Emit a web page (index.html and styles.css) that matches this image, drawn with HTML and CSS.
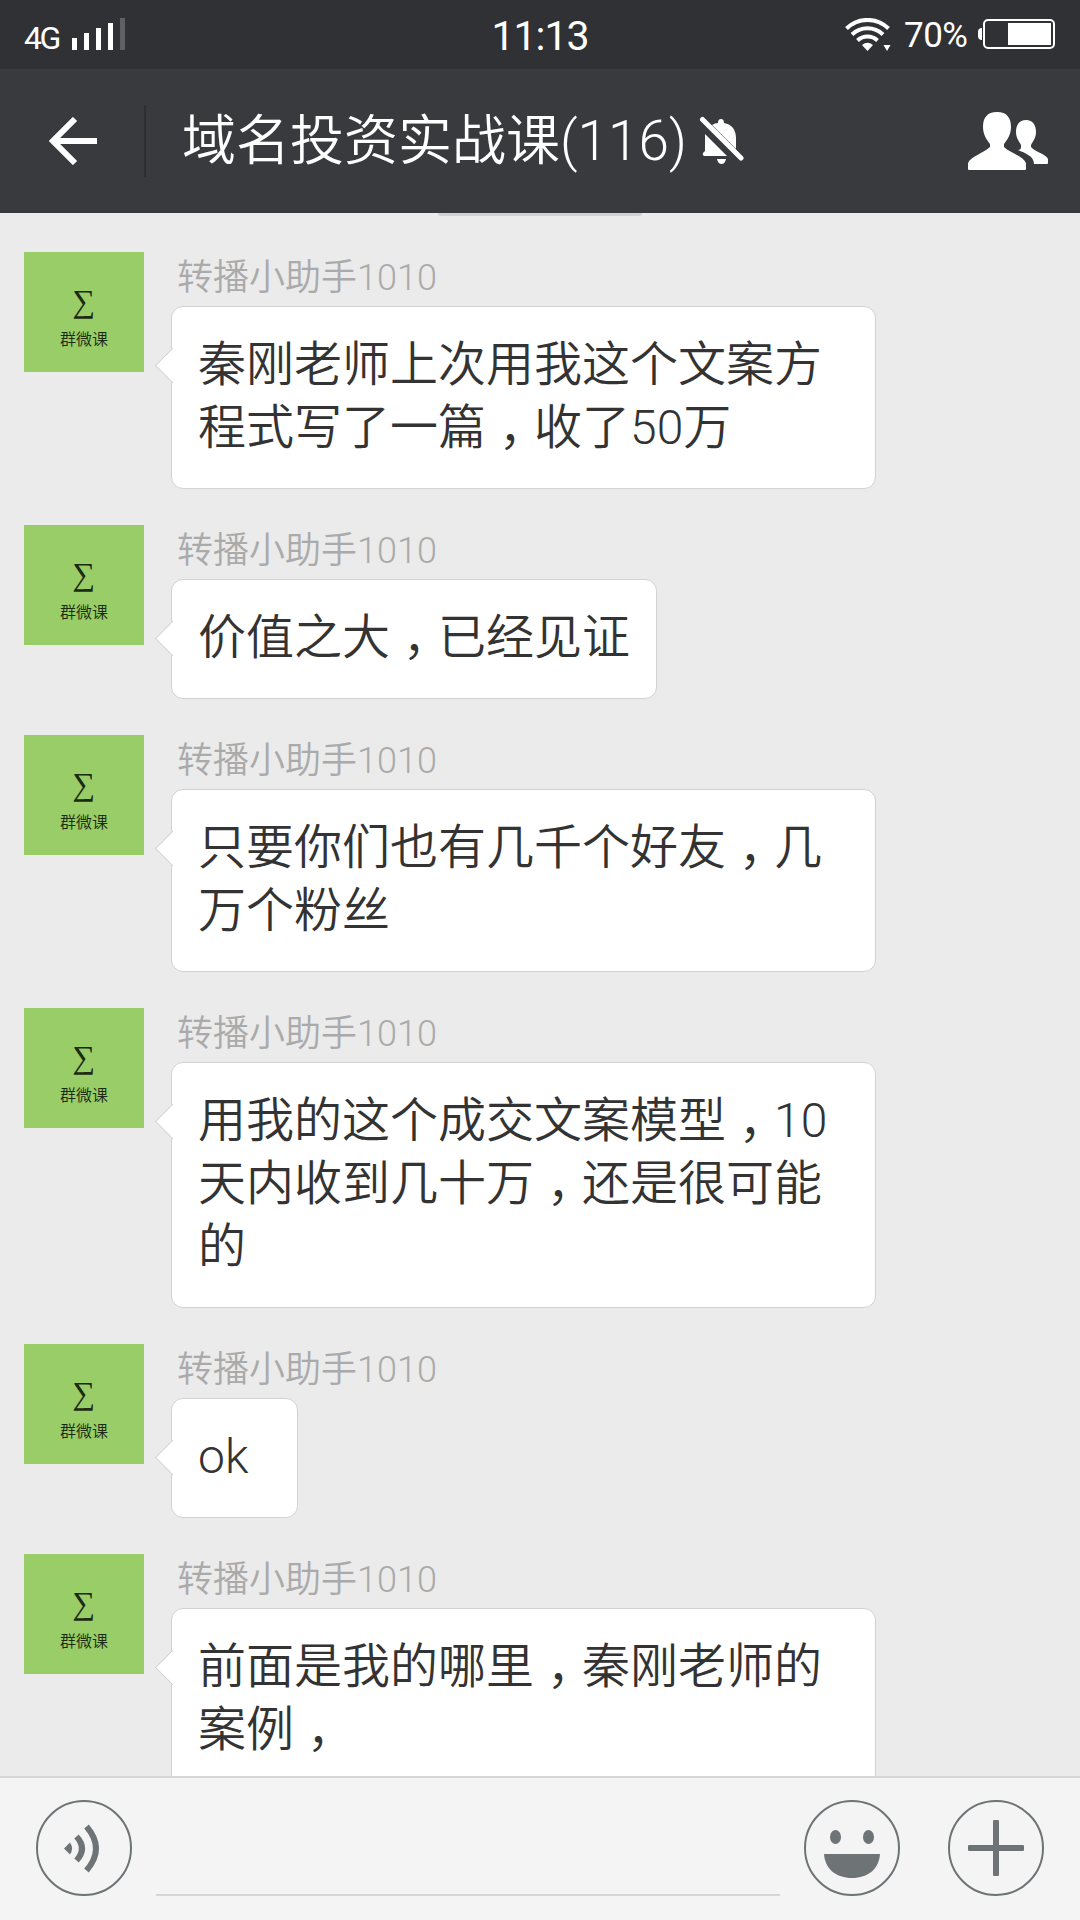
FILE: index.html
```html
<!DOCTYPE html>
<html lang="zh-CN">
<head>
  <meta charset="UTF-8" />
  <meta name="viewport" content="width=device-width, initial-scale=1.0" />
  <title>域名投资实战课(116)</title>
  <link rel="stylesheet" href="styles.css">
</head>
<body>
  <div class="status-bar">
    <div class="status-left">
      <span class="network">4G</span>
      <svg class="signal" width="54" height="32" viewBox="0 0 54 32">
        <path fill="#fff" d="M0 20h5v12H0zM12 15h5v17h-5zM24 10h5v22h-5zM36 5h5v27h-5z"/>
        <path fill="#5f6063" d="M48 0h5v32h-5z"/>
      </svg>
    </div>
    <span class="clock">11:13</span>
    <div class="status-right">
      <svg class="wifi" width="46" height="33" viewBox="0 0 46 33">
        <g fill="none" stroke="#fff" stroke-width="4">
          <path d="M1.500 10.500a30 30 0 0 1 42 0"/>
          <path d="M7 16.500a22.500 22.500 0 0 1 31 0"/>
          <path d="M12.500 22.500a14.500 14.500 0 0 1 20 0"/>
        </g>
        <path fill="#fff" d="M17 27q5.500-4.500 11 0l-5.500 6zM38.500 27h7l-3.500 6z"/>
      </svg>
      <span class="percent">70%</span>
      <svg class="battery" width="78" height="30" viewBox="0 0 78 30">
        <path fill="#fff" d="M4 9v12q-4 0-4-4v-4q0-4 4-4z"/>
        <rect x="6" y="1" width="70" height="28" rx="4" fill="none" stroke="#fff" stroke-width="2"/>
        <path fill="#fff" d="M30 4h43v22H30z"/>
      </svg>
    </div>
  </div>

  <header class="title-bar">
    <svg class="back" width="48" height="48" viewBox="0 0 48 48">
      <path fill="none" stroke="#fff" stroke-width="6" d="M26 2L4 24l22 22M4 24h44"/>
    </svg>
    <div class="divider"></div>
    <h1>域名投资实战课<span class="count">(116)</span></h1>
    <svg class="muted" width="46" height="50" viewBox="0 0 46 50">
      <path fill="#fff" d="M22 3q3 0 3 4 12 2 12 16v10L13 9q3-2 6-2 0-4 3-4zM6 18l22 22H5q-2-1-1-3l2-2zM18 43h9q-1 5-4.500 5T18 43z"/>
      <path stroke="#fff" stroke-width="5" stroke-linecap="round" d="M3.500 3.500L42 42"/>
    </svg>
    <svg class="members" width="80" height="58" viewBox="0 0 80 58">
      <path fill="#fff" d="M29 0c10 0 14 6 14 15 0 8-4 13-7 17v3c6 6 19 9 22 16v6q0 1-1 1H1q-1 0-1-1v-6c3-7 16-10 22-16v-3c-3-4-7-9-7-17C15 6 19 0 29 0z"/>
      <path fill="#fff" d="M58 8c7 0 10 5 10 12 0 6-3 9-5 13v2c4 5 15 7 17 12v4q0 1-1 1H66c0-8-9-11-16-14 2 0 3-1 3-3v-2c-2-4-5-7-5-13 0-7 3-12 10-12z"/>
    </svg>
  </header>

  <main class="chat">
    <div class="time-tag"></div>
    <div class="message">
      <div class="avatar"><span class="sigma">∑</span><span class="brand">群微课</span></div>
      <div class="content">
        <div class="name">转播小助手1010</div>
        <div class="bubble wide">秦刚老师上次用我这个文案方<br>程式写了一篇<span class="comma" lang="zh-TW">，</span>收了50万</div>
      </div>
    </div>
    <div class="message">
      <div class="avatar"><span class="sigma">∑</span><span class="brand">群微课</span></div>
      <div class="content">
        <div class="name">转播小助手1010</div>
        <div class="bubble">价值之大<span class="comma" lang="zh-TW">，</span>已经见证</div>
      </div>
    </div>
    <div class="message">
      <div class="avatar"><span class="sigma">∑</span><span class="brand">群微课</span></div>
      <div class="content">
        <div class="name">转播小助手1010</div>
        <div class="bubble wide">只要你们也有几千个好友<span class="comma" lang="zh-TW">，</span>几<br>万个粉丝</div>
      </div>
    </div>
    <div class="message">
      <div class="avatar"><span class="sigma">∑</span><span class="brand">群微课</span></div>
      <div class="content">
        <div class="name">转播小助手1010</div>
        <div class="bubble wide">用我的这个成交文案模型<span class="comma" lang="zh-TW">，</span>10<br>天内收到几十万<span class="comma" lang="zh-TW">，</span>还是很可能<br>的</div>
      </div>
    </div>
    <div class="message">
      <div class="avatar"><span class="sigma">∑</span><span class="brand">群微课</span></div>
      <div class="content">
        <div class="name">转播小助手1010</div>
        <div class="bubble">ok</div>
      </div>
    </div>
    <div class="message">
      <div class="avatar"><span class="sigma">∑</span><span class="brand">群微课</span></div>
      <div class="content">
        <div class="name">转播小助手1010</div>
        <div class="bubble wide">前面是我的哪里<span class="comma" lang="zh-TW">，</span>秦刚老师的<br>案例<span class="comma" lang="zh-TW">，</span></div>
      </div>
    </div>
  </main>

  <footer class="input-bar">
    <svg width="96" height="96" viewBox="0 0 96 96">
      <circle cx="48" cy="48" r="47" fill="none" stroke="#6e7376" stroke-width="2"/>
      <path fill="#6e7376" d="M28 48.500l6-6q4 6 0 12z"/>
      <path fill="none" stroke="#6e7376" stroke-width="6" d="M40.500 36.500q11 12 0 24M50.500 26.500q19 22 0 44"/>
    </svg>
    <div class="text-field"></div>
    <svg class="emoji" width="96" height="96" viewBox="0 0 96 96">
      <circle cx="48" cy="48" r="47" fill="none" stroke="#6e7376" stroke-width="2"/>
      <ellipse cx="31.500" cy="37" rx="5.500" ry="7" fill="#6e7376"/>
      <ellipse cx="64.500" cy="37" rx="5.500" ry="7" fill="#6e7376"/>
      <path fill="#6e7376" d="M20 54h56c-1 15-12 24-28 24S21 69 20 54z"/>
    </svg>
    <svg class="more" width="96" height="96" viewBox="0 0 96 96">
      <circle cx="48" cy="48" r="47" fill="none" stroke="#6e7376" stroke-width="2"/>
      <rect x="20" y="45" width="56" height="6" rx="1" fill="#6e7376"/>
      <rect x="45" y="20" width="6" height="56" rx="1" fill="#6e7376"/>
    </svg>
  </footer>
</body>
</html>
```

FILE: styles.css
```css
* {
  box-sizing: border-box;
}
body {
  margin: 0;
  height: 1920px;
  display: flex;
  flex-direction: column;
  overflow: hidden;
  background: #ebebeb;
  font-family: Roboto, "Noto Sans CJK SC", sans-serif;
  font-weight: 350;
}
svg {
  display: block;
  flex-shrink: 0;
}

/* status bar */
.status-bar {
  height: 69px;
  flex-shrink: 0;
  display: grid;
  grid-template-columns: 1fr auto 1fr;
  padding: 0 24px;
  background: #303134;
  color: #fff;
  font-weight: 400;
}
.status-left,
.status-right {
  display: flex;
  align-items: flex-start;
}
.status-right {
  justify-content: flex-end;
}
.network {
  width: 48px;
  padding-top: 19px;
  font-size: 32px;
  line-height: 38px;
  letter-spacing: -2.5px;
}
.signal {
  margin-top: 18px;
}
.clock {
  padding-top: 13px;
  font-size: 41px;
  line-height: 47px;
  letter-spacing: -1px;
}
.wifi {
  margin-top: 18px;
}
.percent {
  width: 87px;
  padding: 15px 0 0 13px;
  font-size: 35px;
  line-height: 42px;
  letter-spacing: -0.5px;
}
.battery {
  margin-top: 19px;
}

/* title bar */
.title-bar {
  height: 144px;
  flex-shrink: 0;
  display: flex;
  align-items: center;
  padding: 0 32px 0 49px;
  background: #393a3e;
  color: #fff;
}
.back {
  margin-right: 47px;
}
.divider {
  width: 2px;
  height: 72px;
  background: #2e2f32;
}
h1 {
  width: 503px;
  margin: 0 0 0 36px;
  font-size: 54px;
  font-weight: 350;
  line-height: 80px;
  white-space: nowrap;
}
.count {
  font-size: 55px;
}
.muted {
  margin-left: 14px;
}
.members {
  margin-left: auto;
}

/* messages */
.chat {
  flex: 1;
  min-height: 0;
  overflow: hidden;
}
.time-tag {
  width: 204px;
  height: 3px;
  margin: 0 auto 36px;
  border-radius: 0 0 6px 6px;
  background: #d1d1d1;
}
.message {
  display: flex;
  padding-left: 24px;
  margin-bottom: 36px;
}
.avatar {
  width: 120px;
  height: 120px;
  margin-right: 27px;
  padding-top: 29px;
  display: flex;
  flex-direction: column;
  align-items: center;
  background: #98cd68;
  color: #1c2a12;
}
.sigma {
  font-family: "Liberation Serif", serif;
  font-size: 32px;
  font-weight: 400;
  line-height: 40px;
}
.brand {
  padding-top: 5px;
  font-size: 16px;
  line-height: 28px;
}
.name {
  height: 54px;
  padding-left: 6px;
  color: #aaa;
  font-size: 36px;
  line-height: 52px;
}
.bubble {
  position: relative;
  width: fit-content;
  min-width: 127px;
  padding: 26px 26px 29px;
  border: 1px solid #d2d2d2;
  border-radius: 12px;
  background: #fff;
  color: #333;
  font-size: 48px;
  line-height: 63px;
  white-space: nowrap;
}
.bubble.wide {
  width: 705px;
}
.bubble::before {
  content: "";
  position: absolute;
  left: -12px;
  top: 46px;
  width: 24px;
  height: 24px;
  border: solid #d2d2d2;
  border-width: 0 0 1px 1px;
  background: #fff;
  transform: rotate(45deg);
}
/* comma centred in its cell, dropped to the baseline */
.comma {
  font-family: "Noto Sans CJK TC", sans-serif;
  line-height: 0;
  vertical-align: -15px;
}

/* input bar */
.input-bar {
  height: 144px;
  flex-shrink: 0;
  display: flex;
  padding: 22px 36px 0;
  border-top: 2px solid #d6d6d6;
  background: #f4f4f4;
}
.text-field {
  flex: 1;
  height: 96px;
  margin: 0 24px;
  border-bottom: 2px solid #d6d6d6;
}
.more {
  margin-left: 48px;
}
```
